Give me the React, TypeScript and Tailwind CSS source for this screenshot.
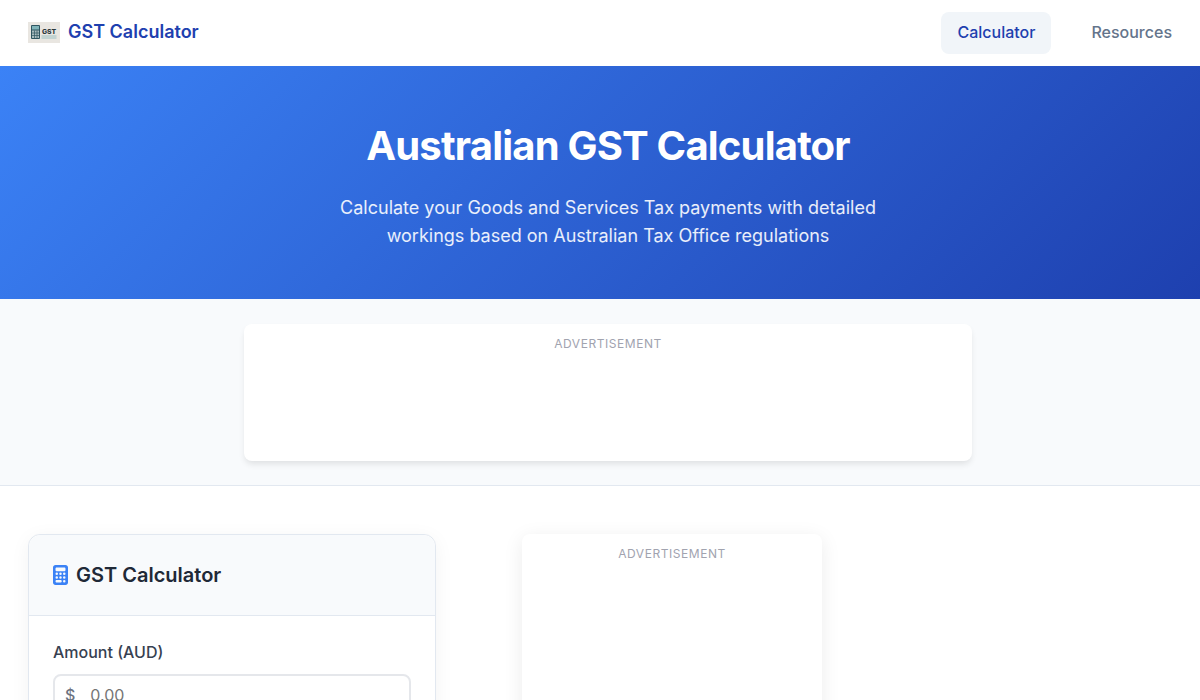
import { FaCalculator } from 'react-icons/fa6'

function Logo() {
  return (
    <svg width="32" height="21" viewBox="0 0 32 21" className="shrink-0">
      <rect width="32" height="21" fill="#e9e6e1" />
      <rect x="3" y="3" width="9" height="14" rx="1" fill="#2f5560" />
      <rect x="4" y="4" width="7" height="3.5" fill="#7fb3b8" />
      <rect x="4" y="8.5" width="7" height="7.5" fill="#a9bcbe" />
      <path d="M4 11h7M4 13.5h7M6.5 8.5v7.5M9 8.5v7.5" stroke="#2f5560" strokeWidth="0.7" />
      <text x="14" y="12" fontSize="6.8" fontWeight="800" fill="#2a373c" fontFamily="Inter, sans-serif">GST</text>
      <rect x="13.5" y="13.5" width="15" height="1" fill="#9cc0c4" />
      <rect x="13.5" y="15.5" width="15" height="1" fill="#9cc0c4" />
    </svg>
  )
}

function AdBox({ className, labelClass }: { className: string; labelClass: string }) {
  return (
    <div className={`bg-white rounded-lg shadow-[0_4px_6px_-1px_rgba(0,0,0,0.1)] ${className}`}>
      <div className={`text-center text-xs tracking-[0.55px] leading-[16px] text-[#a1a3af] ${labelClass}`}>ADVERTISEMENT</div>
    </div>
  )
}

export default function App() {
  return (
    <div className="h-[700px] overflow-hidden bg-white font-['Inter',sans-serif] text-[#1f2937]">
      {/* Nav */}
      <header className="h-[66px] flex items-center justify-between px-7 bg-white">
        <div className="flex items-center gap-2 pb-[2px]">
          <Logo />
          <span className="text-lg font-semibold text-[#1e40af]">GST Calculator</span>
        </div>
        <nav className="flex items-center gap-10">
          <a className="px-4 pt-[9px] pb-[11px] rounded-lg bg-[#f1f5f9] text-base leading-[22px] font-medium text-[#1e40af]">Calculator</a>
          <a className="pt-[9px] pb-[11px] text-base leading-[22px] font-medium text-[#64748b]">Resources</a>
        </nav>
      </header>

      {/* Hero */}
      <section className="h-[233px] pl-4 pt-[53px] text-center text-white bg-[linear-gradient(135deg,#3b82f6_0%,#1e40af_100%)]">
        <h1 className="text-[40px] leading-[54px] font-bold tracking-[-0.8px]">Australian GST Calculator</h1>
        <p className="mt-[21px] mx-auto w-[600px] text-lg leading-[28px] text-white/90">
          Calculate your Goods and Services Tax payments with detailed workings based on Australian Tax Office regulations
        </p>
      </section>

      {/* Top ad */}
      <section className="h-[187px] pl-4 pt-[25px] bg-[#f8fafc] border-b border-[#e2e8f0]">
        <AdBox className="w-[728px] h-[137px] mx-auto" labelClass="pt-[12px]" />
      </section>

      {/* Main */}
      <main className="flex items-start pt-[48px] pl-7">
        <div className="w-[408px] shrink-0 rounded-xl border border-[#e2e8f0] bg-white shadow-[0_4px_20px_rgba(0,0,0,0.05)]">
          <div className="h-[81px] flex items-center gap-2 px-6 rounded-t-xl bg-[#f8fafc] border-b border-[#e2e8f0]">
            <FaCalculator className="w-[15px] h-[20px] text-[#3b82f6]" />
            <h2 className="text-xl font-semibold text-[#1f2937]">GST Calculator</h2>
          </div>
          <div className="px-6 pt-[24px] pb-6">
            <label className="block text-base leading-[24px] font-medium text-[#374151]">Amount (AUD)</label>
            <div className="mt-[10px] h-[50px] flex items-start gap-[15px] px-[10px] pt-[7px] rounded-lg border-2 border-[#e5e7eb]">
              <span className="text-base font-medium text-[#6b7280]">$</span>
              <span className="text-base text-[#757575]">0.00</span>
            </div>
          </div>
        </div>
        <AdBox className="ml-[86px] w-[300px] h-[600px] shrink-0 shadow-[0_4px_20px_rgba(0,0,0,0.08)]" labelClass="pt-[12px]" />
      </main>
    </div>
  )
}
